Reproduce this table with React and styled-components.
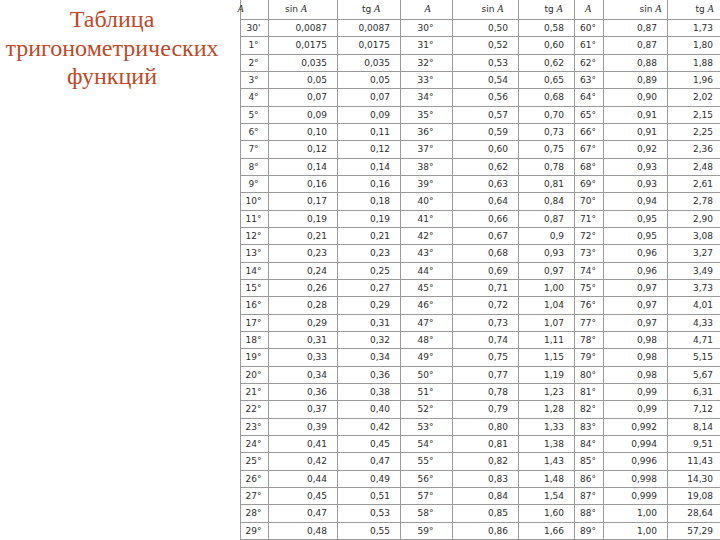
import React from 'react';
import styled, { createGlobalStyle } from 'styled-components';

const rows = [
  ["30'", '0,0087', '0,0087', '30°', '0,50', '0,58', '60°', '0,87', '1,73'],
  ['1°', '0,0175', '0,0175', '31°', '0,52', '0,60', '61°', '0,87', '1,80'],
  ['2°', '0,035', '0,035', '32°', '0,53', '0,62', '62°', '0,88', '1,88'],
  ['3°', '0,05', '0,05', '33°', '0,54', '0,65', '63°', '0,89', '1,96'],
  ['4°', '0,07', '0,07', '34°', '0,56', '0,68', '64°', '0,90', '2,02'],
  ['5°', '0,09', '0,09', '35°', '0,57', '0,70', '65°', '0,91', '2,15'],
  ['6°', '0,10', '0,11', '36°', '0,59', '0,73', '66°', '0,91', '2,25'],
  ['7°', '0,12', '0,12', '37°', '0,60', '0,75', '67°', '0,92', '2,36'],
  ['8°', '0,14', '0,14', '38°', '0,62', '0,78', '68°', '0,93', '2,48'],
  ['9°', '0,16', '0,16', '39°', '0,63', '0,81', '69°', '0,93', '2,61'],
  ['10°', '0,17', '0,18', '40°', '0,64', '0,84', '70°', '0,94', '2,78'],
  ['11°', '0,19', '0,19', '41°', '0,66', '0,87', '71°', '0,95', '2,90'],
  ['12°', '0,21', '0,21', '42°', '0,67', '0,9', '72°', '0,95', '3,08'],
  ['13°', '0,23', '0,23', '43°', '0,68', '0,93', '73°', '0,96', '3,27'],
  ['14°', '0,24', '0,25', '44°', '0,69', '0,97', '74°', '0,96', '3,49'],
  ['15°', '0,26', '0,27', '45°', '0,71', '1,00', '75°', '0,97', '3,73'],
  ['16°', '0,28', '0,29', '46°', '0,72', '1,04', '76°', '0,97', '4,01'],
  ['17°', '0,29', '0,31', '47°', '0,73', '1,07', '77°', '0,97', '4,33'],
  ['18°', '0,31', '0,32', '48°', '0,74', '1,11', '78°', '0,98', '4,71'],
  ['19°', '0,33', '0,34', '49°', '0,75', '1,15', '79°', '0,98', '5,15'],
  ['20°', '0,34', '0,36', '50°', '0,77', '1,19', '80°', '0,98', '5,67'],
  ['21°', '0,36', '0,38', '51°', '0,78', '1,23', '81°', '0,99', '6,31'],
  ['22°', '0,37', '0,40', '52°', '0,79', '1,28', '82°', '0,99', '7,12'],
  ['23°', '0,39', '0,42', '53°', '0,80', '1,33', '83°', '0,992', '8,14'],
  ['24°', '0,41', '0,45', '54°', '0,81', '1,38', '84°', '0,994', '9,51'],
  ['25°', '0,42', '0,47', '55°', '0,82', '1,43', '85°', '0,996', '11,43'],
  ['26°', '0,44', '0,49', '56°', '0,83', '1,48', '86°', '0,998', '14,30'],
  ['27°', '0,45', '0,51', '57°', '0,84', '1,54', '87°', '0,999', '19,08'],
  ['28°', '0,47', '0,53', '58°', '0,85', '1,60', '88°', '1,00', '28,64'],
  ['29°', '0,48', '0,55', '59°', '0,86', '1,66', '89°', '1,00', '57,29'],
];

// header label and its nudge from the column centre (the scan is a bit uneven)
const heads = [
  { fn: '', dx: -14 },
  { fn: 'sin', dx: -7 },
  { fn: 'tg', dx: 2 },
  { fn: '', dx: 1 },
  { fn: 'sin', dx: 7 },
  { fn: 'tg', dx: 7 },
  { fn: '', dx: -1 },
  { fn: 'sin', dx: 15 },
  { fn: 'tg', dx: 9 },
];

export default function App() {
  return (
    <>
      <GlobalStyle />
      <Page>
        <TitlePanel>
          <Title>Таблица тригонометрических функций</Title>
        </TitlePanel>
        <Table>
          {heads.map((h, i) => (
            <HeadCell key={'h' + i}>
              <HeadLabel $dx={h.dx}>
                {h.fn && <span>{h.fn}&nbsp;</span>}
                <Var>A</Var>
              </HeadLabel>
            </HeadCell>
          ))}
          {rows.map((row, r) =>
            row.map((v, c) =>
              c % 3 === 0 ? (
                <AngleCell key={r + '-' + c}>{v}</AngleCell>
              ) : (
                <ValueCell key={r + '-' + c}>{v}</ValueCell>
              )
            )
          )}
        </Table>
      </Page>
    </>
  );
}

const GlobalStyle = createGlobalStyle`
  html, body {
    margin: 0;
    padding: 0;
    background: #fff;
  }
  body {
    width: 720px;
    height: 540px;
    overflow: hidden;
  }
`;

const Page = styled.div`
  width: 720px;
  height: 540px;
  display: flex;
  overflow: hidden;
  background: #fff;
`;

const TitlePanel = styled.div`
  width: 240px;
  flex-shrink: 0;
  box-sizing: border-box;
  padding: 5px 16px 0 0;
`;

const Title = styled.h1`
  margin: 0;
  color: #bd4a28;
  font-family: 'Liberation Serif', 'Times New Roman', serif;
  font-size: 24px;
  font-weight: 400;
  line-height: 28.5px;
  text-align: center;
`;

const Table = styled.div`
  display: grid;
  grid-template-columns: 28px 69px 63px 52px 66px 56px 29px 64px 56px;
  grid-template-rows: 20px;
  grid-auto-rows: 17.33px;
  flex-shrink: 0;
  border-left: 1px solid #9a9a9a;
  font-family: 'DejaVu Sans', Verdana, sans-serif;
  font-size: 9px;
  color: #2e2e2e;
`;

const Cell = styled.div`
  display: flex;
  align-items: center;
  box-sizing: border-box;
  border-right: 1px solid #9a9a9a;
  border-bottom: 1px solid #9a9a9a;
  white-space: nowrap;
`;

const HeadCell = styled(Cell)`
  justify-content: center;
  padding-bottom: 2px;
`;

const HeadLabel = styled.span`
  position: relative;
  left: ${p => p.$dx}px;
`;

const Var = styled.i`
  font-family: 'Liberation Serif', 'Times New Roman', serif;
  font-size: 10px;
`;

const AngleCell = styled(Cell)`
  justify-content: center;
  padding-right: 2px;
`;

const ValueCell = styled(Cell)`
  justify-content: flex-end;
  padding-right: 10px;
`;
